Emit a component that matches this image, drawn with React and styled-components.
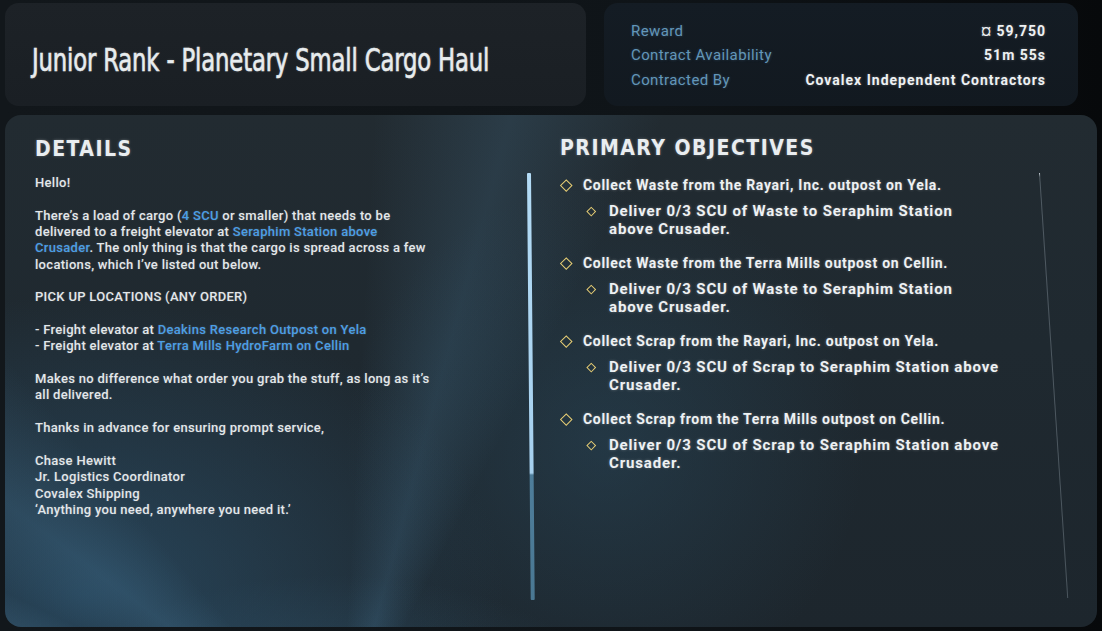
import React from "react";
import styled, { createGlobalStyle } from "styled-components";

const Global = createGlobalStyle`
  html, body { margin: 0; padding: 0; background: #0a0d10; }
  body { font-family: "Roboto", "Liberation Sans", sans-serif; overflow: hidden; }
  * { box-sizing: border-box; }
`;

const Page = styled.div`
  width: 1102px;
  height: 631px;
  padding: 3px 5px 4px 5px;
  display: grid;
  grid-template-rows: 103px 1fr;
  row-gap: 9px;
  background: linear-gradient(90deg, #12171b 0%, #0f1418 60%, #07090b 100%);
`;

const TopRow = styled.div`
  display: grid;
  grid-template-columns: 581px 474px;
  column-gap: 18px;
`;

const TitlePanel = styled.div`
  border-radius: 14px;
  background: linear-gradient(180deg, #1d2227 0%, #1a1f24 100%);
  display: flex;
  align-items: center;
  padding: 10px 0 0 27px;
  overflow: hidden;
`;

const Title = styled.h1`
  margin: 0;
  font-family: "DejaVu Sans Condensed", "Liberation Sans", sans-serif;
  font-weight: 400;
  font-size: 32px;
  letter-spacing: -0.2px;
  color: #e8ecee;
  -webkit-text-stroke: 0.6px #e8ecee;
  text-shadow: 0 0 3px rgba(255, 255, 255, 0.25);
  white-space: nowrap;
  transform: scaleX(0.79);
  transform-origin: left center;
`;

const InfoPanel = styled.div`
  border-radius: 14px;
  background: linear-gradient(180deg, #141c24 0%, #121920 100%);
  padding: 16px 32px 0 27px;
  display: grid;
  grid-template-rows: 24px 24px 26px;
  align-content: start;
`;

const InfoRow = styled.div`
  display: flex;
  justify-content: space-between;
  align-items: center;
`;

const InfoLabel = styled.span`
  font-size: 15px;
  letter-spacing: 0.4px;
  color: #6396b8;
  text-shadow: 0 0 3px rgba(90, 150, 200, 0.35);
`;

const InfoValue = styled.span`
  font-size: 14px;
  font-weight: 700;
  letter-spacing: 1px;
  color: #eef1f3;
  text-shadow: 0 0 3px rgba(255, 255, 255, 0.3);
`;

const Main = styled.div`
  border-radius: 16px;
  padding: 22px 57px 0 30px;
  display: grid;
  grid-template-columns: 497px 480px;
  column-gap: 28px;
  background:
    conic-gradient(from -95deg at 335px 640px,
      rgba(0,0,0,0) 0deg,
      rgba(90,150,190,0.2) 6deg,
      rgba(0,0,0,0) 13deg,
      rgba(100,160,200,0.24) 22deg,
      rgba(0,0,0,0) 31deg,
      rgba(90,150,190,0.16) 42deg,
      rgba(0,0,0,0) 55deg,
      rgba(0,0,0,0) 98deg,
      rgba(90,150,190,0.16) 110deg,
      rgba(0,0,0,0) 122deg,
      rgba(0,0,0,0) 360deg),
    radial-gradient(ellipse 420px 300px at 80px 480px, rgba(50,100,135,0.5), rgba(0,0,0,0) 100%),
    radial-gradient(ellipse 260px 260px at 600px 330px, rgba(45,85,110,0.35), rgba(0,0,0,0) 100%),
    radial-gradient(ellipse 300px 160px at 330px 620px, rgba(60,110,140,0.45), rgba(0,0,0,0) 100%),
    linear-gradient(180deg, #222b31 0%, #1f2930 45%, #1d262d 100%),
    #1d252b;
`;

const Column = styled.section`
  display: flex;
  flex-direction: column;
`;

const Heading = styled.h2`
  margin: 0;
  height: 24px;
  line-height: 24px;
  font-family: "DejaVu Sans Condensed", "Liberation Sans", sans-serif;
  font-weight: 700;
  font-size: 21px;
  letter-spacing: 1.5px;
  color: #e9edf0;
  text-shadow: 0 0 3px rgba(255, 255, 255, 0.3);
  margin-top: ${(p) => p.$top || 0}px;
`;

const BodyRow = styled.div`
  margin-top: ${(p) => p.$gap}px;
  height: 427px;
  display: grid;
  grid-template-columns: 1fr ${(p) => p.$bar}px;
`;

const DetailsText = styled.div`
  padding-top: 2px;
  font-size: 13px;
  letter-spacing: 0.3px;
  line-height: 16.35px;
  color: #e3e7ea;
  font-weight: 500;
  text-shadow: 0 0 2px rgba(255, 255, 255, 0.2);
`;

const Para = styled.p`
  margin: 0 0 16.35px 0;
  white-space: nowrap;
`;

const Link = styled.span`
  color: #4a9ee6;
`;

const ScrollTrack = styled.div`
  width: 4px;
  height: 427px;
  border-radius: 1px;
  background: linear-gradient(180deg, #b3dbf5 0px, #a6d0ee 300px, #4e7d9a 302px, #4a7893 100%);
  transform: skewX(0.5deg);
  transform-origin: top;
`;

const ThinLine = styled.div`
  width: 1px;
  height: 425px;
  background: linear-gradient(180deg, #c8d0d6 0px, #4f5a62 4px, #4a555d 100%);
  transform: skewX(3.8deg);
  transform-origin: top;
`;

const Objectives = styled.div`
  padding-top: 3px;
  display: flex;
  flex-direction: column;
  gap: 16px;
`;

const Group = styled.div`
  display: flex;
  flex-direction: column;
  gap: 8px;
`;

const ObjLine = styled.div`
  display: grid;
  grid-template-columns: ${(p) => (p.$sub ? "26px 23px 1fr" : "0 23px 1fr")};
  align-items: start;
  font-size: ${(p) => (p.$sub ? 15 : 14)}px;
  font-weight: 700;
  letter-spacing: ${(p) => (p.$sub ? 0.85 : 0.7)}px;
  line-height: 18px;
  color: #eef1f3;
  text-shadow: 0 0 3px rgba(255, 255, 255, 0.3);
  white-space: nowrap;
`;

const DiamondCell = styled.span`
  grid-column: 2;
  height: 18px;
  display: flex;
  align-items: center;
  padding-left: 2px;
`;

const Diamond = styled.span`
  display: block;
  width: ${(p) => (p.$sub ? 6.5 : 8.5)}px;
  height: ${(p) => (p.$sub ? 6.5 : 8.5)}px;
  border: ${(p) => (p.$sub ? 1.5 : 1.8)}px solid #e6cd74;
  transform: rotate(45deg);
`;

const ObjText = styled.span`
  grid-column: 3;
`;

const objectives = [
  {
    main: "Collect Waste from the Rayari, Inc. outpost on Yela.",
    sub: ["Deliver 0/3 SCU of Waste to Seraphim Station", "above Crusader."],
  },
  {
    main: "Collect Waste from the Terra Mills outpost on Cellin.",
    sub: ["Deliver 0/3 SCU of Waste to Seraphim Station", "above Crusader."],
  },
  {
    main: "Collect Scrap from the Rayari, Inc. outpost on Yela.",
    sub: ["Deliver 0/3 SCU of Scrap to Seraphim Station above", "Crusader."],
  },
  {
    main: "Collect Scrap from the Terra Mills outpost on Cellin.",
    sub: ["Deliver 0/3 SCU of Scrap to Seraphim Station above", "Crusader."],
  },
];

export default function App() {
  return (
    <>
      <Global />
      <Page>
        <TopRow>
          <TitlePanel>
            <Title>Junior Rank - Planetary Small Cargo Haul</Title>
          </TitlePanel>
          <InfoPanel>
            <InfoRow>
              <InfoLabel>Reward</InfoLabel>
              <InfoValue>¤ 59,750</InfoValue>
            </InfoRow>
            <InfoRow>
              <InfoLabel>Contract Availability</InfoLabel>
              <InfoValue>51m 55s</InfoValue>
            </InfoRow>
            <InfoRow>
              <InfoLabel>Contracted By</InfoLabel>
              <InfoValue>Covalex Independent Contractors</InfoValue>
            </InfoRow>
          </InfoPanel>
        </TopRow>
        <Main>
          <Column>
            <Heading $top={0}>DETAILS</Heading>
            <BodyRow $gap={12} $bar={5}>
              <DetailsText>
                <Para>Hello!</Para>
                <Para>
                  There’s a load of cargo (<Link>4 SCU</Link> or smaller) that needs to be
                  <br />
                  delivered to a freight elevator at <Link>Seraphim Station above</Link>
                  <br />
                  <Link>Crusader</Link>. The only thing is that the cargo is spread across a few
                  <br />
                  locations, which I’ve listed out below.
                </Para>
                <Para>PICK UP LOCATIONS (ANY ORDER)</Para>
                <Para>
                  - Freight elevator at <Link>Deakins Research Outpost on Yela</Link>
                  <br />- Freight elevator at <Link>Terra Mills HydroFarm on Cellin</Link>
                </Para>
                <Para>
                  Makes no difference what order you grab the stuff, as long as it’s
                  <br />
                  all delivered.
                </Para>
                <Para>Thanks in advance for ensuring prompt service,</Para>
                <Para>
                  Chase Hewitt
                  <br />
                  Jr. Logistics Coordinator
                  <br />
                  Covalex Shipping
                  <br />
                  ‘Anything you need, anywhere you need it.’
                </Para>
              </DetailsText>
              <ScrollTrack />
            </BodyRow>
          </Column>
          <Column>
            <Heading $top={-1}>PRIMARY OBJECTIVES</Heading>
            <BodyRow $gap={13} $bar={1}>
              <Objectives>
                {objectives.map((o, i) => (
                  <Group key={i}>
                    <ObjLine>
                      <DiamondCell>
                        <Diamond />
                      </DiamondCell>
                      <ObjText>{o.main}</ObjText>
                    </ObjLine>
                    <ObjLine $sub>
                      <DiamondCell>
                        <Diamond $sub />
                      </DiamondCell>
                      <ObjText>
                        {o.sub[0]}
                        <br />
                        {o.sub[1]}
                      </ObjText>
                    </ObjLine>
                  </Group>
                ))}
              </Objectives>
              <ThinLine />
            </BodyRow>
          </Column>
        </Main>
      </Page>
    </>
  );
}
